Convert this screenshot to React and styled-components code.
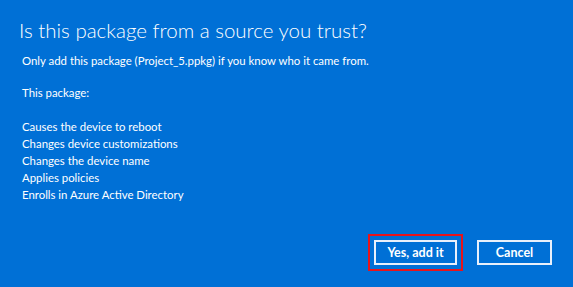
import React from 'react'
import styled, { createGlobalStyle } from 'styled-components'

const Global = createGlobalStyle`
  html, body { margin: 0; padding: 0; }
  body { background: #0070d6; font-family: Lato, "Open Sans", sans-serif; }
`

const items = [
  'Causes the device to reboot',
  'Changes device customizations',
  'Changes the device name',
  'Applies policies',
  'Enrolls in Azure Active Directory',
]

export default function App() {
  return (
    <>
      <Global />
      <Dialog>
        <Title>Is this package from a source you trust?</Title>
        <Body>
          <Line>Only add this package (Project_5.ppkg) if you know who it came from.</Line>
          <Line $gap>This package:</Line>
          <List>
            {items.map((t) => (
              <Line key={t}>{t}</Line>
            ))}
          </List>
        </Body>
        <Actions>
          <Button $highlight>Yes, add it</Button>
          <Button $narrow>Cancel</Button>
        </Actions>
      </Dialog>
    </>
  )
}

const Dialog = styled.div`
  width: 573px;
  height: 287px;
  box-sizing: border-box;
  background: #0070d6;
  color: #fff;
  padding: 15px 21px 0 19px;
  display: flex;
  flex-direction: column;
`

const Title = styled.h1`
  margin: 0;
  font-family: Lato, "Open Sans", sans-serif;
  font-weight: 300;
  font-size: 20.5px;
  line-height: 30px;
`

const Body = styled.div`
  padding-left: 3px;
  margin-top: 7px;
  font-size: 11.4px;
  line-height: 17px;
`

const Line = styled.div`
  margin-top: ${(p) => (p.$gap ? '15px' : '0')};
  white-space: nowrap;
`

const List = styled.div`
  margin-top: 17px;
`

const Actions = styled.div`
  margin-top: auto;
  margin-bottom: 22px;
  display: flex;
  justify-content: flex-end;
  gap: 20px;
`

const Button = styled.button`
  width: ${(p) => (p.$narrow ? '75px' : '83px')};
  height: 25px;
  box-sizing: border-box;
  background: #0070d6;
  border: 2px solid #e8f0fb;
  color: #fff;
  font-family: Lato, "Open Sans", sans-serif;
  font-weight: 700;
  font-size: 12.5px;
  padding: 0;
  outline: ${(p) => (p.$highlight ? '2px solid #e8141b' : 'none')};
  outline-offset: 4px;
`
